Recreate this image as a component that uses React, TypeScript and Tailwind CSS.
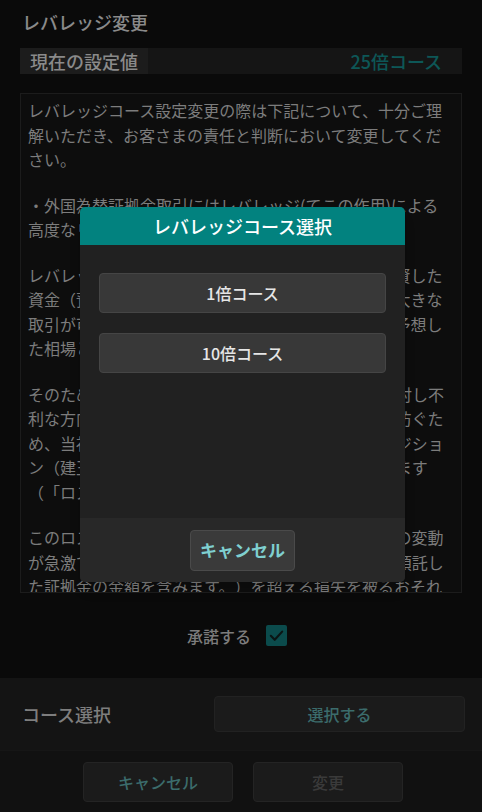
import { useState } from "react"

const paragraphs: string[][] = [
  [
    "レバレッジコース設定変更の際は下記について、十分ご理",
    "解いただき、お客さまの責任と判断において変更してくだ",
    "さい。",
  ],
  [
    "・外国為替証拠金取引にはレバレッジ(てこの作用)による",
    "高度なリスクが伴います。",
  ],
  [
    "レバレッジ効果により、お客さまが証拠金として投資した",
    "資金（預託証拠金）の額に比べて、はるかに金額の大きな",
    "取引が可能となるため、利益を期待できる一方で、予想し",
    "た相場と逆方向に動くと損失も大きくなります。",
  ],
  [
    "そのため、相場がお客さまの保有するポジションに対し不",
    "利な方向に変動した場合に、さらなる損失の拡大を防ぐた",
    "め、当社ではロスカットルールによりお客さまのポジショ",
    "ン（建玉）を自動的に反対売買により決済をいたします",
    "（「ロスカット」といいます。）",
  ],
  [
    "このロスカットルールが適用された場合でも、相場の変動",
    "が急激である場合などには、お客さまが当社に対し預託し",
    "た証拠金の金額を含みます。）を超える損失を被るおそれ",
    "があります。",
  ],
]

const courses = ["1倍コース", "10倍コース"]

export default function App() {
  const [agreed, setAgreed] = useState(true)

  return (
    <div
      className="relative h-[812px] w-[482px] overflow-hidden bg-[#0a0a0a] text-[#8a8a8a]"
      style={{ fontFamily: '"Noto Sans CJK JP", "Noto Sans", sans-serif' }}
    >
      <div className="px-5">
        <h1 className="pl-[2px] pt-[10px] text-[18px] leading-[24px] font-medium text-[#8a8a8a]">レバレッジ変更</h1>

        <div className="mt-[14px] flex h-[26px] items-center justify-between bg-[#151515]">
          <div className="flex h-full items-center bg-[#1c1c1c] px-[10px] text-[18px] leading-none font-medium text-[#8a8a8a]">
            現在の設定値
          </div>
          <div className="pr-5 text-[18px] leading-none font-medium text-[#0d5757]">25倍コース</div>
        </div>

        <div className="mt-[19px] h-[500px] overflow-hidden border border-[#1c1c1c] bg-[#0d0d0d] px-[7px] pt-[4px]">
          <div className="flex flex-col gap-[21px] text-[16px] leading-[24.5px] text-[#7c7c7c] [text-spacing-trim:space-all]">
            {paragraphs.map((lines, i) => (
              <p key={i} className="whitespace-nowrap">
                {lines.map((line, j) => (
                  <span key={j} className="block">
                    {line}
                  </span>
                ))}
              </p>
            ))}
          </div>
        </div>
      </div>

      <div className="flex h-[85px] items-center justify-center gap-[15px] pr-[8px]">
        <span className="text-[16px] font-medium text-[#7c7c7c]">承諾する</span>
        <button
          onClick={() => setAgreed(!agreed)}
          className="flex h-[21px] w-[21px] items-center justify-center rounded-[2px] bg-[#0b4b4c]"
        >
          {agreed && (
            <svg viewBox="0 0 24 24" className="h-[17px] w-[17px]" fill="none" stroke="#0b1414" strokeWidth="3" strokeLinecap="round" strokeLinejoin="round">
              <polyline points="4,12.5 9.5,18 20,6.5" />
            </svg>
          )}
        </button>
      </div>

      <div className="flex h-[72px] items-center justify-between bg-[#141414] pl-[22px] pr-[17px]">
        <span className="text-[18px] font-medium text-[#7e7e7e]">コース選択</span>
        <button className="h-[36px] w-[251px] rounded-[4px] border border-[#222] bg-[#1b1b1b] text-[16px] font-medium text-[#3b6c6c]">
          選択する
        </button>
      </div>

      <div className="flex h-[62px] items-center justify-center gap-5 border-t border-[#161616] bg-[#111111] pl-[4px]">
        <button className="h-[40px] w-[150px] rounded-[4px] border border-[#242424] bg-[#1b1b1b] text-[16px] font-medium text-[#3b6c6c]">
          キャンセル
        </button>
        <button className="h-[40px] w-[150px] rounded-[4px] border border-[#242424] bg-[#1b1b1b] text-[16px] font-medium text-[#3a3a3a]">
          変更
        </button>
      </div>

      <div className="absolute left-[80px] top-[207px] flex h-[375px] w-[325px] flex-col overflow-hidden rounded-[5px] bg-[#212121] shadow-lg">
        <div className="flex h-[38px] items-center justify-center bg-[#02827f] text-[18px] font-medium text-white">
          レバレッジコース選択
        </div>
        <div className="flex flex-1 flex-col gap-5 px-[19px] pt-[28px]">
          {courses.map((c) => (
            <button
              key={c}
              className="h-[40px] w-full rounded-[4px] border border-[#454545] bg-[#383838] text-[16px] font-medium text-[#e6e6e6]"
            >
              {c}
            </button>
          ))}
        </div>
        <div className="flex h-[64px] items-center justify-center bg-[#282828]">
          <button className="h-[41px] w-[105px] rounded-[4px] border border-[#4a4a4a] bg-[#3a3a3a] text-[17px] font-bold text-[#7fcfd0]">
            キャンセル
          </button>
        </div>
      </div>
    </div>
  )
}
